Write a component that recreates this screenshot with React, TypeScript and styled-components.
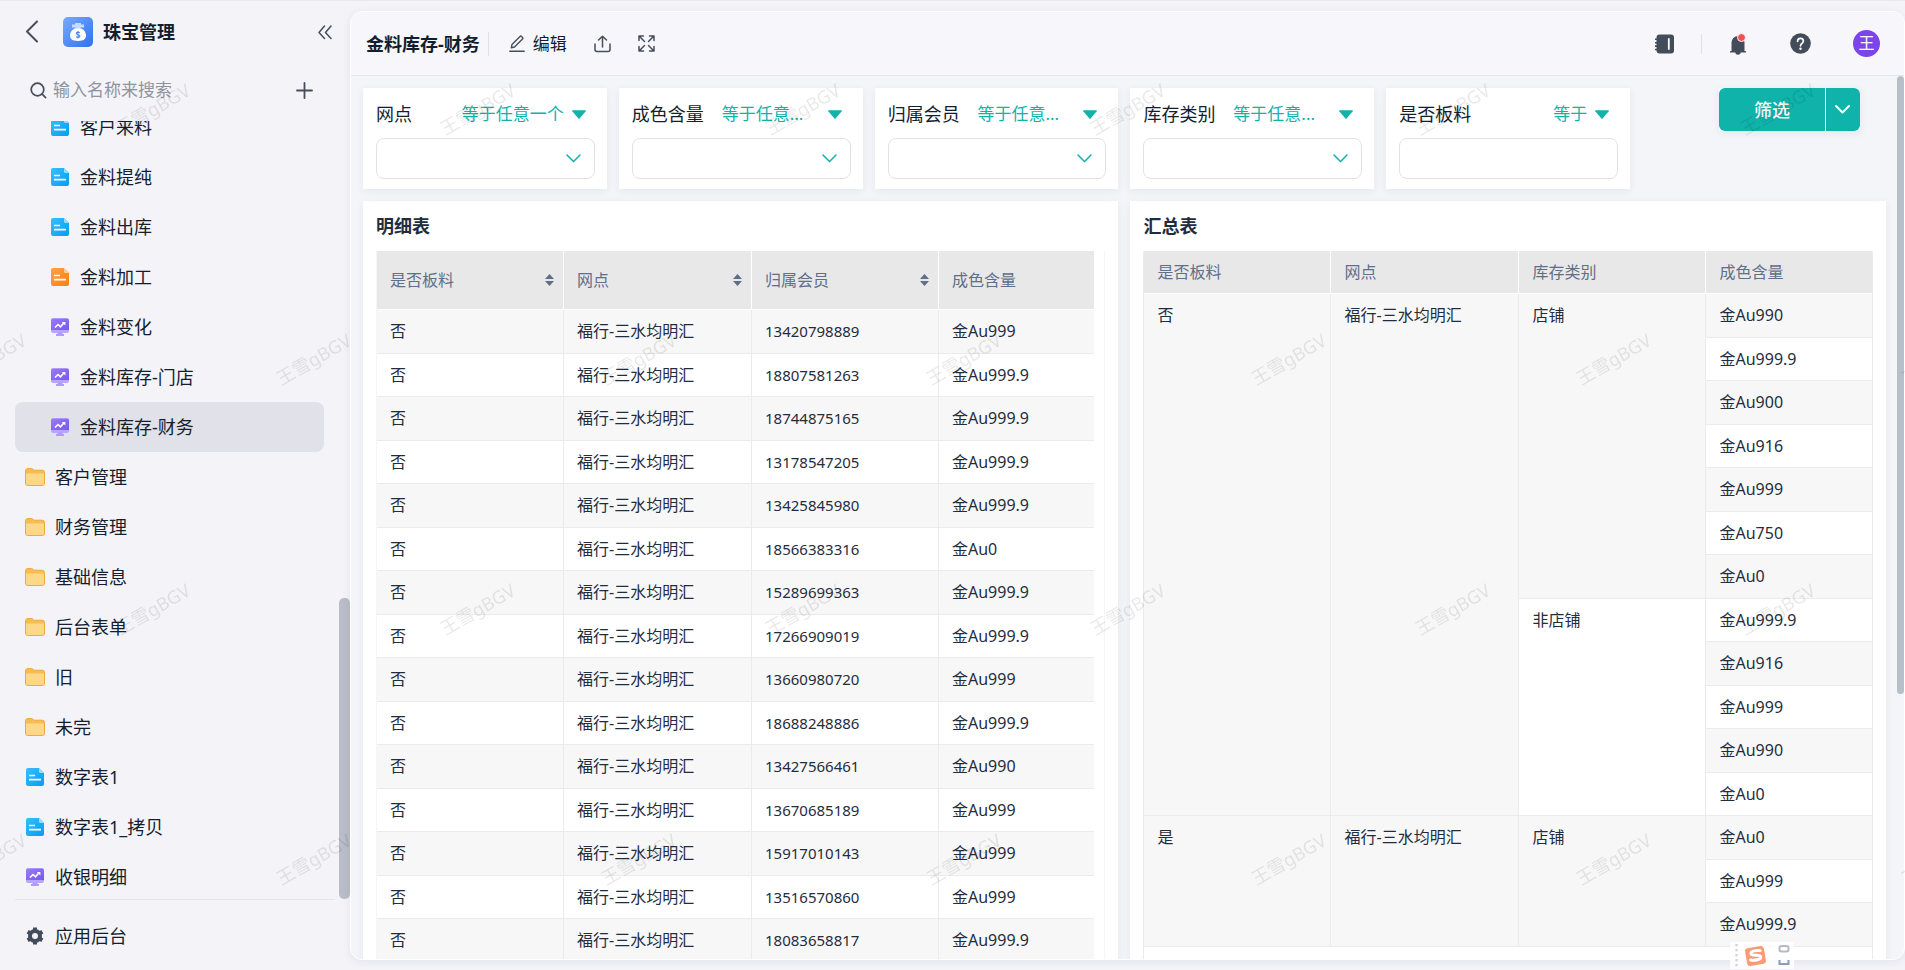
import React from "react";
import styled, { createGlobalStyle, css } from "styled-components";

const teal = "#0fb3a9";
const ink = "#141e2e";

const GlobalStyle = createGlobalStyle`
  *, *::before, *::after { box-sizing: border-box; }
  body {
    margin: 0;
    background: #f3f3f8;
    color: ${ink};
    font-family: "Noto Sans", "Noto Sans CJK SC", sans-serif;
    font-size: 18px;
    line-height: 24px;
  }
  button, input, select { font: inherit; color: inherit; }
  button { border: 0; padding: 0; background: none; cursor: pointer; }
  h1, h2, ul { margin: 0; padding: 0; }
  svg { display: block; flex: none; }
`;

/* ---------- layout ---------- */

const Page = styled.div`
  display: flex;
  height: 100vh;
  overflow: hidden;
  border-top: 1px solid #eaeaec;
`;

const Sidebar = styled.aside`
  display: flex;
  flex-direction: column;
  flex: none;
  width: 350px;
`;

const AppHeader = styled.div`
  display: flex;
  align-items: center;
  height: 62px;
  padding: 0 17px 0 24px;
`;

const AppLogo = styled.span`
  display: block;
  margin: 0 10px 0 23px;
`;

const AppName = styled.h1`
  flex: 1;
  font-size: 18px;
  line-height: 24px;
  font-weight: 700;
`;

const IconButton = styled.button`
  display: flex;
  align-items: center;
  justify-content: center;
  color: #454e5d;
`;

const SearchRow = styled.div`
  display: flex;
  align-items: center;
  gap: 6px;
  height: 58px;
  padding: 0 37px 4px 30px;
  color: #454e5d;
`;

const SearchInput = styled.input`
  flex: 1;
  min-width: 0;
  padding: 0;
  border: 0;
  outline: 0;
  background: transparent;
  font-size: 17px;
  &::placeholder { color: #8f939e; opacity: 1; }
`;

const NavViewport = styled.div`
  display: flex;
  flex: 1;
  min-height: 0;
  overflow: hidden;
`;

const NavList = styled.ul`
  flex: 1;
  height: 100%;
  margin-top: -19px;
  padding: 0 15px;
  list-style: none;
`;

const NavLink = styled.a<{ $nested?: boolean; $active?: boolean }>`
  display: flex;
  align-items: center;
  gap: 11px;
  height: 50px;
  padding-left: ${(p) => (p.$nested ? 36 : 11)}px;
  border-radius: 8px;
  color: ${ink};
  text-decoration: none;
  background: ${(p) => (p.$active ? "#e0e1e9" : "transparent")};
`;

const NavIcon = styled.span`
  display: flex;
  justify-content: center;
  width: 18px;
`;

const NavTrack = styled.div`
  display: flex;
  flex-direction: column;
  justify-content: flex-end;
  width: 11px;
`;

const NavThumb = styled.div`
  height: 301px;
  border-radius: 5px;
  background: #b9bdc8;
`;

const SidebarFooter = styled.div`
  margin: 0 15px;
  padding: 11px 0 9px;
  border-top: 1px solid #e4e5ea;
`;

const Main = styled.main`
  display: flex;
  flex-direction: column;
  flex: 1;
  min-width: 0;
  margin: 10px 0 10px;
  border: 1px solid #fff;
  border-radius: 12px;
  overflow: hidden;
  background: #f4f5f9;
  box-shadow: 0 2px 8px rgba(40, 40, 90, 0.08);
`;

const Toolbar = styled.header`
  display: flex;
  align-items: center;
  flex: none;
  height: 64px;
  padding: 0 24px 0 15px;
  border-bottom: 1px solid #e6e7ec;
  background: #f7f7fb;
`;

const PageTitle = styled.h2`
  font-size: 18px;
  line-height: 24px;
  font-weight: 700;
`;

const Divider = styled.span`
  width: 1px;
  height: 24px;
  margin: 0 20px 0 8px;
  background: #dfe0e6;
`;

const ToolActions = styled.div`
  display: flex;
  align-items: center;
  gap: 27px;
  flex: 1;
`;

const ToolButton = styled(IconButton)`
  gap: 8px;
  font-size: 17px;
  span { color: ${ink}; }
`;

const HeaderRight = styled.div`
  display: flex;
  align-items: center;
`;

const RightDivider = styled.span`
  width: 1px;
  height: 20px;
  margin: 0 28px 0 27px;
  background: #dfe0e6;
`;

const HelpButton = styled(IconButton)`
  margin-left: 43px;
`;

const Avatar = styled.button`
  width: 27px;
  height: 27px;
  margin-left: 42px;
  border-radius: 50%;
  background: #7c45ea;
  color: #fff;
  font-size: 16px;
  line-height: 27px;
`;

const Scroller = styled.div`
  display: flex;
  flex: 1;
  min-height: 0;
  overflow: hidden;
`;

const Dashboard = styled.div`
  display: grid;
  grid-template-columns: repeat(6, minmax(0, 1fr));
  grid-template-rows: 101px auto;
  gap: 12px;
  flex: 1;
  min-width: 0;
  padding: 12px 11px 0 12px;
`;

const PageTrack = styled.div`
  width: 7px;
`;

const PageThumb = styled.div`
  height: 70%;
  border-radius: 4px;
  background: #b9bfc7;
`;

/* ---------- filters ---------- */

const cardSurface = css`
  background: #fff;
  box-shadow: 0 2px 8px rgba(40, 40, 90, 0.07);
`;

const FilterCard = styled.section`
  ${cardSurface}
  padding: 13px 12px 10px 13px;
`;

const FilterHead = styled.div`
  display: flex;
  align-items: center;
  justify-content: space-between;
  height: 26px;
  margin-bottom: 11px;
  padding-right: 9px;
`;

const FilterLabel = styled.label`
  flex: none;
`;

const Condition = styled.button`
  display: flex;
  align-items: center;
  gap: 8px;
  color: ${teal};
  font-size: 17px;
  white-space: nowrap;
`;

const ConditionText = styled.span<{ $fixed: boolean }>`
  width: ${(p) => (p.$fixed ? "98px" : "auto")};
  text-align: left;
`;

const FieldBox = styled.div`
  position: relative;
  svg {
    position: absolute;
    right: 14px;
    top: 16px;
    color: ${teal};
    pointer-events: none;
  }
`;

const field = css`
  display: block;
  width: 100%;
  height: 41px;
  padding: 0 36px 0 12px;
  border: 1px solid #e2e2e4;
  border-radius: 8px;
  background: #fff;
  appearance: none;
  outline: 0;
`;

const FieldSelect = styled.select`${field}`;
const FieldInput = styled.input`${field}`;

const SubmitCell = styled.div`
  display: flex;
  justify-content: flex-end;
  align-items: flex-start;
  padding-right: 26px;
`;

const SplitButton = styled.div`
  ${cardSurface}
  display: flex;
  gap: 1px;
  height: 43px;
  color: #fff;
`;

const SubmitButton = styled.button`
  width: 106px;
  border-radius: 6px 0 0 6px;
  background: ${teal};
  font-weight: 500;
`;

const SubmitMenu = styled.button`
  display: flex;
  align-items: center;
  justify-content: center;
  width: 34px;
  border-radius: 0 6px 6px 0;
  background: ${teal};
`;

/* ---------- tables ---------- */

const Panel = styled.section`
  ${cardSurface}
  grid-column: span 3;
  padding: 13px 13px 0;
`;

const PanelTitle = styled.h2`
  margin-bottom: 13px;
  font-size: 18px;
  line-height: 24px;
  font-weight: 700;
  color: #1f2d3d;
`;

const TableFrame = styled.div<{ $gutter?: boolean }>`
  min-height: 760px;
  padding-right: ${(p) => (p.$gutter ? 10 : 0)}px;
  border: solid ${(p) => (p.$gutter ? "#f5f5f5" : "#ebebeb")};
  border-width: 0 1px;
`;

const DataTable = styled.table<{ $head: number }>`
  width: 100%;
  table-layout: fixed;
  border-collapse: separate;
  border-spacing: 0;
  font-size: 16px;
  color: #1f2d3d;

  th, td {
    padding: 0 9px 0 13px;
    text-align: left;
    vertical-align: top;
    font-weight: 400;
  }
  th {
    width: 187px;
    height: ${(p) => p.$head}px;
    border-right: 1px solid #fff;
    border-bottom: 1px solid #fff;
    background: #e8e8e8;
    color: #5f6f88;
    vertical-align: middle;
  }
  th:nth-child(2) { width: 188px; }
  th:last-child { width: auto; }
  td {
    height: 44px;
    border-right: 1px solid #ebebeb;
    border-bottom: 1px solid #ebebeb;
    line-height: 42px;
  }
  td.number { font-size: 15px; }
  th:last-child, td.last { border-right: 0; }
  tbody tr:nth-child(odd) { background: #f7f7f8; }
  tbody tr:nth-child(even) { background: #fff; }
  tbody tr:nth-child(even) td { height: 43px; }
`;

const HeadCell = styled.div`
  display: flex;
  align-items: center;
  justify-content: space-between;
`;

/* ---------- overlays ---------- */

const WatermarkLayer = styled.div`
  position: fixed;
  inset: 0;
  overflow: hidden;
  pointer-events: none;
  user-select: none;
`;

const WatermarkRow = styled.div<{ $shifted: boolean }>`
  display: flex;
  height: 250px;
  margin-left: ${(p) => (p.$shifted ? -174 : -10)}px;
`;

const WatermarkCell = styled.span`
  display: flex;
  align-items: center;
  justify-content: center;
  flex: none;
  width: 325px;
  height: 218px;
  color: rgba(0, 0, 0, 0.09);
  font-size: 18px;
  transform: rotate(-30deg);
`;

const ImeBar = styled.div`
  position: fixed;
  right: 111px;
  bottom: 1px;
  display: flex;
  align-items: center;
  width: 64px;
  height: 27px;
  background: rgba(255, 255, 255, 0.8);
`;

/* ---------- icons ---------- */

const stroke = { fill: "none", stroke: "currentColor", strokeLinecap: "round", strokeLinejoin: "round" } as const;

const BackIcon = () => (
  <svg width="16" height="24" viewBox="0 0 16 24" {...stroke} strokeWidth="2"><path d="M13 1.500 3 11.500l10 10" /></svg>
);
const CollapseIcon = () => (
  <svg width="16" height="16" viewBox="0 0 16 16" {...stroke} strokeWidth="1.500"><path d="M7.500 2 2 8.500l5.500 6M14 2 8.500 8.500l5.500 6" /></svg>
);
const SearchIcon = () => (
  <svg width="17" height="17" viewBox="0 0 17 17" {...stroke} strokeWidth="1.700"><circle cx="7.500" cy="7.500" r="6.300" /><path d="m12.200 12.200 3.400 3.400" /></svg>
);
const PlusIcon = () => (
  <svg width="17" height="17" viewBox="0 0 17 17" {...stroke} strokeWidth="1.800"><path d="M8.500 1v15M1 8.500h15" /></svg>
);
const LogoIcon = () => (
  <svg width="30" height="30" viewBox="0 0 30 30">
    <defs>
      <linearGradient id="logoBg" x1="0" y1="0" x2="1" y2="1"><stop offset="0" stopColor="#79aafc" /><stop offset="1" stopColor="#2e70f2" /></linearGradient>
    </defs>
    <rect width="30" height="30" rx="5" fill="url(#logoBg)" />
    <path d="M12 6h6v1.500h3v3h-3.500V12h-5v-1.500H9v-3h3z" fill="#c5dafd" />
    <path d="M11.500 11.500h7c2.500 1.500 4.500 3.700 4.500 6.800 0 3.700-2.300 5.700-8 5.700s-8-2-8-5.700c0-3.100 2-5.300 4.500-6.800z" fill="#fff" />
    <path d="M16.800 15.800c-.5-.5-1.100-.7-1.800-.7-1 0-1.700.5-1.700 1.300 0 1.700 3.600.9 3.600 2.700 0 .8-.8 1.300-1.900 1.300-.8 0-1.500-.3-1.900-.8M15 14v7.500" fill="none" stroke="#4a87f6" strokeWidth="1.100" />
  </svg>
);
const DocIcon = ({ orange }: { orange?: boolean }) => {
  const id = orange ? "docOrange" : "docBlue";
  return (
    <svg width="18" height="18" viewBox="0 0 18 18">
      <defs>
        <linearGradient id={id} x1="0" y1="0" x2="1" y2="1">
          <stop offset="0" stopColor={orange ? "#ffa245" : "#37bfff"} />
          <stop offset="1" stopColor={orange ? "#fb7e14" : "#049df0"} />
        </linearGradient>
      </defs>
      <path d="M2 0h11l5 5v11a2 2 0 0 1-2 2H2a2 2 0 0 1-2-2V2a2 2 0 0 1 2-2z" fill={`url(#${id})`} />
      <path d="M13 0l5 5h-3.500A1.500 1.500 0 0 1 13 3.500z" fill={orange ? "#ffcb98" : "#9addfd"} />
      <path d="M3 7.500h6M3 11.700h12" stroke="#fff" strokeWidth="1.700" />
    </svg>
  );
};
const BoardIcon = () => (
  <svg width="18" height="18" viewBox="0 0 18 18">
    <defs>
      <linearGradient id="board" x1="0" y1="0" x2="1" y2="1"><stop offset="0" stopColor="#9a7bfa" /><stop offset="1" stopColor="#7657ea" /></linearGradient>
    </defs>
    <rect y="0" width="18" height="15" rx="2" fill="#b9a5ff" />
    <path d="M6.500 14.500h5V16H13v2H5v-2h1.500z" fill="#b09aff" />
    <path d="M2 .8h14a2 2 0 0 1 2 2V12H0V2.800a2 2 0 0 1 2-2z" fill="url(#board)" />
    <path d="m4 9.500 3-3 2.500 2.300L13 4.800" fill="none" stroke="#fff" strokeWidth="1.600" />
    <path d="M10.800 4h3.600v3.600z" fill="#fff" />
  </svg>
);
const FolderIcon = () => (
  <svg width="20" height="18" viewBox="0 0 20 18">
    <path d="M.5 3A2.500 2.500 0 0 1 3 .5h3.200c.8 0 1.300.3 1.800.8l.9.9H17A2.500 2.500 0 0 1 19.500 4.700V15a2.500 2.500 0 0 1-2.500 2.500H3A2.500 2.500 0 0 1 .5 15z" fill="#f7bd54" stroke="#eeaa3b" />
    <path d="M1 5.500h18V15a2 2 0 0 1-2 2H3a2 2 0 0 1-2-2z" fill="#fdd889" />
  </svg>
);
const GearIcon = () => (
  <svg width="18" height="18" viewBox="0 0 18 18">
    <circle cx="9" cy="9" r="5" fill="none" stroke="#434c5a" strokeWidth="4" />
    <path d="M9 .5v3M9 14.500v3M1.640 4.750l2.600 1.500M13.760 11.750l2.600 1.500M1.640 13.250l2.600-1.500M13.760 6.250l2.600-1.500" stroke="#434c5a" strokeWidth="4" />
  </svg>
);
const EditIcon = () => (
  <svg width="16" height="18" viewBox="0 0 16 18" {...stroke} strokeWidth="1.400"><path d="M.8 16.300h14.400M2.300 12.800l.7-3.300L11 1.500c.5-.5 1.100-.5 1.600 0l.9.900c.5.500.5 1.100 0 1.600l-8 8z" /></svg>
);
const UploadIcon = () => (
  <svg width="17" height="18" viewBox="0 0 17 18" {...stroke} strokeWidth="1.500"><path d="M8.500 12V1.500M4.500 5l4-3.700 4 3.700M1 9v5.500A2 2 0 0 0 3 16.500h11a2 2 0 0 0 2-2V9" /></svg>
);
const ExpandIcon = () => (
  <svg width="17" height="17" viewBox="0 0 17 17" {...stroke} strokeWidth="1.500"><path d="M1 5.500V1h4.500M1.300 1.300 6.500 6.500M11.500 1H16v4.500M15.700 1.300 10.500 6.500M16 11.500V16h-4.500M15.700 15.700l-5.200-5.200M5.500 16H1v-4.500M1.300 15.700l5.200-5.200" /></svg>
);
const NotebookIcon = () => (
  <svg width="19" height="20" viewBox="0 0 19 20">
    <rect x="1.500" y=".5" width="17.500" height="19" rx="3" fill="#434c5a" />
    <path d="M0 5.300h3M0 8.700h3M0 12.100h3M0 15.500h3" stroke="#434c5a" strokeWidth="1.600" />
    <path d="M13.800 5v10" stroke="#fff" strokeWidth="1.800" strokeLinecap="round" />
  </svg>
);
const BellIcon = () => (
  <svg width="17" height="22" viewBox="0 0 17 22">
    <path d="M1.500 18V9.500a6.500 6.500 0 0 1 13 0V18l1.500.3v1.200H0v-1.200zM5.300 19h5.400a2.700 2.700 0 0 1-5.400 0z" fill="#434c5a" />
    <circle cx="11.500" cy="4.500" r="4" fill="#f0524f" stroke="#f7f7fb" strokeWidth="1" />
  </svg>
);
const HelpIcon = () => (
  <svg width="21" height="21" viewBox="0 0 21 21">
    <circle cx="10.500" cy="10.500" r="10.300" fill="#434c5a" />
    <path d="M7.600 8.300c0-1.800 1.200-2.900 2.900-2.900s2.900 1.100 2.900 2.700c0 2.200-2.900 2.400-2.900 4.700" fill="none" stroke="#fff" strokeWidth="1.700" strokeLinecap="round" />
    <circle cx="10.500" cy="15.700" r="1.200" fill="#fff" />
  </svg>
);
const Caret = () => (
  <svg width="14" height="9" viewBox="0 0 14 9"><path d="M.7.300h12.600c.5 0 .7.500.4.900L7.600 8.400a.8.800 0 0 1-1.200 0L.3 1.200C0 .8.200.3.7.3z" fill="currentColor" /></svg>
);
const Chevron = ({ heavy }: { heavy?: boolean }) => (
  <svg width="15" height="9" viewBox="0 0 15 9" {...stroke} strokeWidth={heavy ? 2 : 1.5}><path d="m1 1 6.500 6.500L14 1" /></svg>
);
const SortIcon = () => (
  <svg width="9" height="12" viewBox="0 0 9 12"><path d="M4.500 0 9 5H0zM0 7h9l-4.500 5z" fill="#5f6f88" /></svg>
);
const ImeIcon = () => (
  <svg width="64" height="27" viewBox="0 0 64 27">
    <path d="M6.500 2v24" stroke="#cfd0d4" strokeWidth="2.200" strokeDasharray="2.200 2.800" />
    <g transform="rotate(-10 25.500 14)">
      <rect x="16" y="5" width="19" height="18" rx="3" fill="#f99b76" />
      <path d="M31 9.500c-3-1-9.500-1.600-9.500 1.400 0 3.200 9 1.400 9 4.700 0 3.200-6.500 2.800-10.500 1.500" fill="none" stroke="#fff" strokeWidth="3" strokeLinecap="round" />
    </g>
    <rect x="49.500" y="4" width="9" height="5.500" rx="2" fill="none" stroke="#b7bac4" strokeWidth="2" />
    <path d="M49.500 18v4h9v-4" fill="none" stroke="#8b9bbd" strokeWidth="2" />
  </svg>
);

/* ---------- data ---------- */

type Kind = "doc" | "orange" | "board" | "folder";
const navItems: { name: string; kind: Kind; nested?: boolean; active?: boolean }[] = [
  { name: "客户来料", kind: "doc", nested: true },
  { name: "金料提纯", kind: "doc", nested: true },
  { name: "金料出库", kind: "doc", nested: true },
  { name: "金料加工", kind: "orange", nested: true },
  { name: "金料变化", kind: "board", nested: true },
  { name: "金料库存-门店", kind: "board", nested: true },
  { name: "金料库存-财务", kind: "board", nested: true, active: true },
  { name: "客户管理", kind: "folder" },
  { name: "财务管理", kind: "folder" },
  { name: "基础信息", kind: "folder" },
  { name: "后台表单", kind: "folder" },
  { name: "旧", kind: "folder" },
  { name: "未完", kind: "folder" },
  { name: "数字表1", kind: "doc" },
  { name: "数字表1_拷贝", kind: "doc" },
  { name: "收银明细", kind: "board" },
];

const kindIcon: Record<Kind, React.ReactNode> = {
  doc: <DocIcon />,
  orange: <DocIcon orange />,
  board: <BoardIcon />,
  folder: <FolderIcon />,
};

const filters = [
  { label: "网点", condition: "等于任意一个", select: true },
  { label: "成色含量", condition: "等于任意...", select: true },
  { label: "归属会员", condition: "等于任意...", select: true },
  { label: "库存类别", condition: "等于任意...", select: true },
  { label: "是否板料", condition: "等于", select: false },
];

const outlet = "福行-三水均明汇";

const detailRows: [string, string][] = [
  ["13420798889", "金Au999"],
  ["18807581263", "金Au999.9"],
  ["18744875165", "金Au999.9"],
  ["13178547205", "金Au999.9"],
  ["13425845980", "金Au999.9"],
  ["18566383316", "金Au0"],
  ["15289699363", "金Au999.9"],
  ["17266909019", "金Au999.9"],
  ["13660980720", "金Au999"],
  ["18688248886", "金Au999.9"],
  ["13427566461", "金Au990"],
  ["13670685189", "金Au999"],
  ["15917010143", "金Au999"],
  ["13516570860", "金Au999"],
  ["18083658817", "金Au999.9"],
];

type Merged = { text: string; span: number };
const summaryRows: { merged: Merged[]; purity: string }[] = [
  { merged: [{ text: "否", span: 12 }, { text: outlet, span: 12 }, { text: "店铺", span: 7 }], purity: "金Au990" },
  { merged: [], purity: "金Au999.9" },
  { merged: [], purity: "金Au900" },
  { merged: [], purity: "金Au916" },
  { merged: [], purity: "金Au999" },
  { merged: [], purity: "金Au750" },
  { merged: [], purity: "金Au0" },
  { merged: [{ text: "非店铺", span: 5 }], purity: "金Au999.9" },
  { merged: [], purity: "金Au916" },
  { merged: [], purity: "金Au999" },
  { merged: [], purity: "金Au990" },
  { merged: [], purity: "金Au0" },
  { merged: [{ text: "是", span: 3 }, { text: outlet, span: 3 }, { text: "店铺", span: 3 }], purity: "金Au0" },
  { merged: [], purity: "金Au999" },
  { merged: [], purity: "金Au999.9" },
];

export default function App() {
  return (
    <>
      <GlobalStyle />
      <Page>
        <Sidebar>
          <AppHeader>
            <IconButton aria-label="返回"><BackIcon /></IconButton>
            <AppLogo><LogoIcon /></AppLogo>
            <AppName>珠宝管理</AppName>
            <IconButton aria-label="收起"><CollapseIcon /></IconButton>
          </AppHeader>
          <SearchRow>
            <SearchIcon />
            <SearchInput type="text" aria-label="搜索" placeholder="输入名称来搜索" />
            <IconButton aria-label="新建"><PlusIcon /></IconButton>
          </SearchRow>
          <NavViewport>
            <NavList>
              {navItems.map((item) => (
                <li key={item.name}>
                  <NavLink href="#" $nested={item.nested} $active={item.active} aria-current={item.active ? "page" : undefined}>
                    <NavIcon>{kindIcon[item.kind]}</NavIcon>
                    {item.name}
                  </NavLink>
                </li>
              ))}
            </NavList>
            <NavTrack><NavThumb /></NavTrack>
          </NavViewport>
          <SidebarFooter>
            <NavLink href="#"><NavIcon><GearIcon /></NavIcon>应用后台</NavLink>
          </SidebarFooter>
        </Sidebar>

        <Main>
          <Toolbar>
            <PageTitle>金料库存-财务</PageTitle>
            <Divider />
            <ToolActions>
              <ToolButton><EditIcon /><span>编辑</span></ToolButton>
              <ToolButton aria-label="分享"><UploadIcon /></ToolButton>
              <ToolButton aria-label="全屏"><ExpandIcon /></ToolButton>
            </ToolActions>
            <HeaderRight>
              <IconButton aria-label="通讯录"><NotebookIcon /></IconButton>
              <RightDivider />
              <IconButton aria-label="通知"><BellIcon /></IconButton>
              <HelpButton aria-label="帮助"><HelpIcon /></HelpButton>
              <Avatar>王</Avatar>
            </HeaderRight>
          </Toolbar>

          <Scroller>
            <Dashboard>
              {filters.map((f, i) => {
                const id = `filter-${i}`;
                return (
                  <FilterCard key={f.label}>
                    <FilterHead>
                      <FilterLabel htmlFor={id}>{f.label}</FilterLabel>
                      <Condition aria-haspopup="listbox">
                        <ConditionText $fixed={f.condition.endsWith("...")}>{f.condition}</ConditionText>
                        <Caret />
                      </Condition>
                    </FilterHead>
                    <FieldBox>
                      {f.select ? (
                        <>
                          <FieldSelect id={id}><option value="" /></FieldSelect>
                          <Chevron />
                        </>
                      ) : (
                        <FieldInput id={id} type="text" />
                      )}
                    </FieldBox>
                  </FilterCard>
                );
              })}
              <SubmitCell>
                <SplitButton>
                  <SubmitButton>筛选</SubmitButton>
                  <SubmitMenu aria-label="更多筛选"><Chevron heavy /></SubmitMenu>
                </SplitButton>
              </SubmitCell>

              <Panel>
                <PanelTitle>明细表</PanelTitle>
                <TableFrame $gutter>
                  <DataTable $head={59}>
                    <thead>
                      <tr>
                        {["是否板料", "网点", "归属会员"].map((h) => (
                          <th key={h}><HeadCell>{h}<SortIcon /></HeadCell></th>
                        ))}
                        <th>成色含量</th>
                      </tr>
                    </thead>
                    <tbody>
                      {detailRows.map(([member, purity]) => (
                        <tr key={member}>
                          <td>否</td>
                          <td>{outlet}</td>
                          <td className="number">{member}</td>
                          <td className="last">{purity}</td>
                        </tr>
                      ))}
                    </tbody>
                  </DataTable>
                </TableFrame>
              </Panel>

              <Panel>
                <PanelTitle>汇总表</PanelTitle>
                <TableFrame>
                  <DataTable $head={43}>
                    <thead>
                      <tr>
                        {["是否板料", "网点", "库存类别", "成色含量"].map((h) => <th key={h}>{h}</th>)}
                      </tr>
                    </thead>
                    <tbody>
                      {summaryRows.map((row, i) => (
                        <tr key={i}>
                          {row.merged.map((m, j) => <td key={j} rowSpan={m.span}>{m.text}</td>)}
                          <td className="last">{row.purity}</td>
                        </tr>
                      ))}
                    </tbody>
                  </DataTable>
                </TableFrame>
              </Panel>
            </Dashboard>
            <PageTrack><PageThumb /></PageTrack>
          </Scroller>
        </Main>
      </Page>

      <ImeBar><ImeIcon /></ImeBar>

      <WatermarkLayer aria-hidden="true">
        {[0, 1, 2, 3].map((row) => (
          <WatermarkRow key={row} $shifted={row % 2 === 1}>
            {[0, 1, 2, 3, 4, 5, 6].map((cell) => <WatermarkCell key={cell}>王雪gBGV</WatermarkCell>)}
          </WatermarkRow>
        ))}
      </WatermarkLayer>
    </>
  );
}
